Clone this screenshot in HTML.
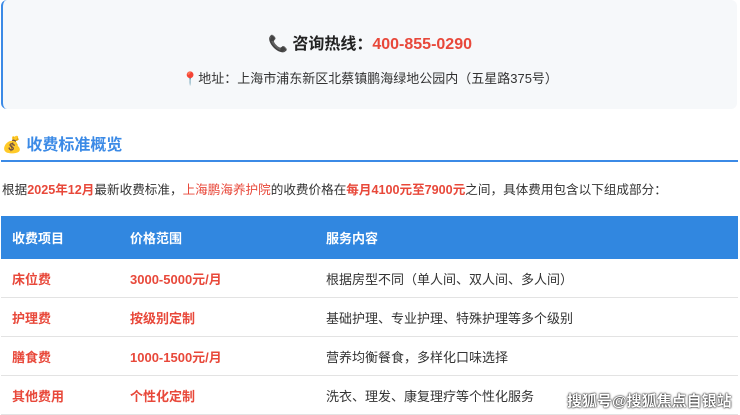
<!DOCTYPE html>
<html><head><meta charset="utf-8"><style>
body{margin:0;width:740px;height:414px;overflow:hidden;background:#fff;font-family:"Liberation Sans","Noto Sans CJK SC",sans-serif;color:#333;position:relative}
.box{position:absolute;left:1px;top:0;width:736px;height:109px;background:#f6f8fa;border-left:2px solid #3b8ae6;border-radius:6px;box-sizing:border-box}
.ph{position:absolute;top:30px;left:0;width:100%;text-align:center;font-size:16px;font-weight:bold;color:#222}
.ph .r{color:#e8483a}
.ad{position:absolute;top:68px;left:0;width:100%;text-align:center;font-size:13px;color:#333}
.h{position:absolute;left:2px;top:131px;font-size:16px;font-weight:bold;color:#3b8ae6}
.line{position:absolute;left:1px;top:160px;width:737px;height:2px;background:#3b8ae6}
.p{position:absolute;left:2px;top:179px;font-size:12.6px;white-space:nowrap}
.p b{color:#e8483a}.p span{color:#e8483a}
table{position:absolute;left:1px;top:216px;width:737px;border-collapse:collapse;font-size:13px}
th{background:#3187e0;color:#fff;text-align:left;height:43px;padding:0 0 0 11px;font-weight:bold}
td{height:38px;padding:0 0 0 11px;border-bottom:1px solid #e3e3e3}
td.a,td.b{color:#e8483a;font-weight:bold}
.wm{position:absolute;left:567px;top:390px;font-size:15px;color:#fff;font-weight:bold;text-shadow:0 0 2px #000,0 0 1px #000}
</style></head><body>
<div class="box">
<div class="ph">📞 咨询热线：<span class="r">400-855-0290</span></div>
<div class="ad">📍地址：上海市浦东新区北蔡镇鹏海绿地公园内（五星路375号）</div>
</div>
<div class="h">💰 收费标准概览</div>
<div class="line"></div>
<div class="p">根据<b>2025年12月</b>最新收费标准，<span>上海鹏海养护院</span>的收费价格在<b>每月4100元至7900元</b>之间，具体费用包含以下组成部分：</div>
<table>
<tr><th style="width:107px">收费项目</th><th style="width:185px">价格范围</th><th>服务内容</th></tr>
<tr><td class="a">床位费</td><td class="b">3000-5000元/月</td><td>根据房型不同（单人间、双人间、多人间）</td></tr>
<tr><td class="a">护理费</td><td class="b">按级别定制</td><td>基础护理、专业护理、特殊护理等多个级别</td></tr>
<tr><td class="a">膳食费</td><td class="b">1000-1500元/月</td><td>营养均衡餐食，多样化口味选择</td></tr>
<tr><td class="a">其他费用</td><td class="b">个性化定制</td><td>洗衣、理发、康复理疗等个性化服务</td></tr>
</table>
<div class="wm">搜狐号@搜狐焦点自银站</div>
</body></html>
